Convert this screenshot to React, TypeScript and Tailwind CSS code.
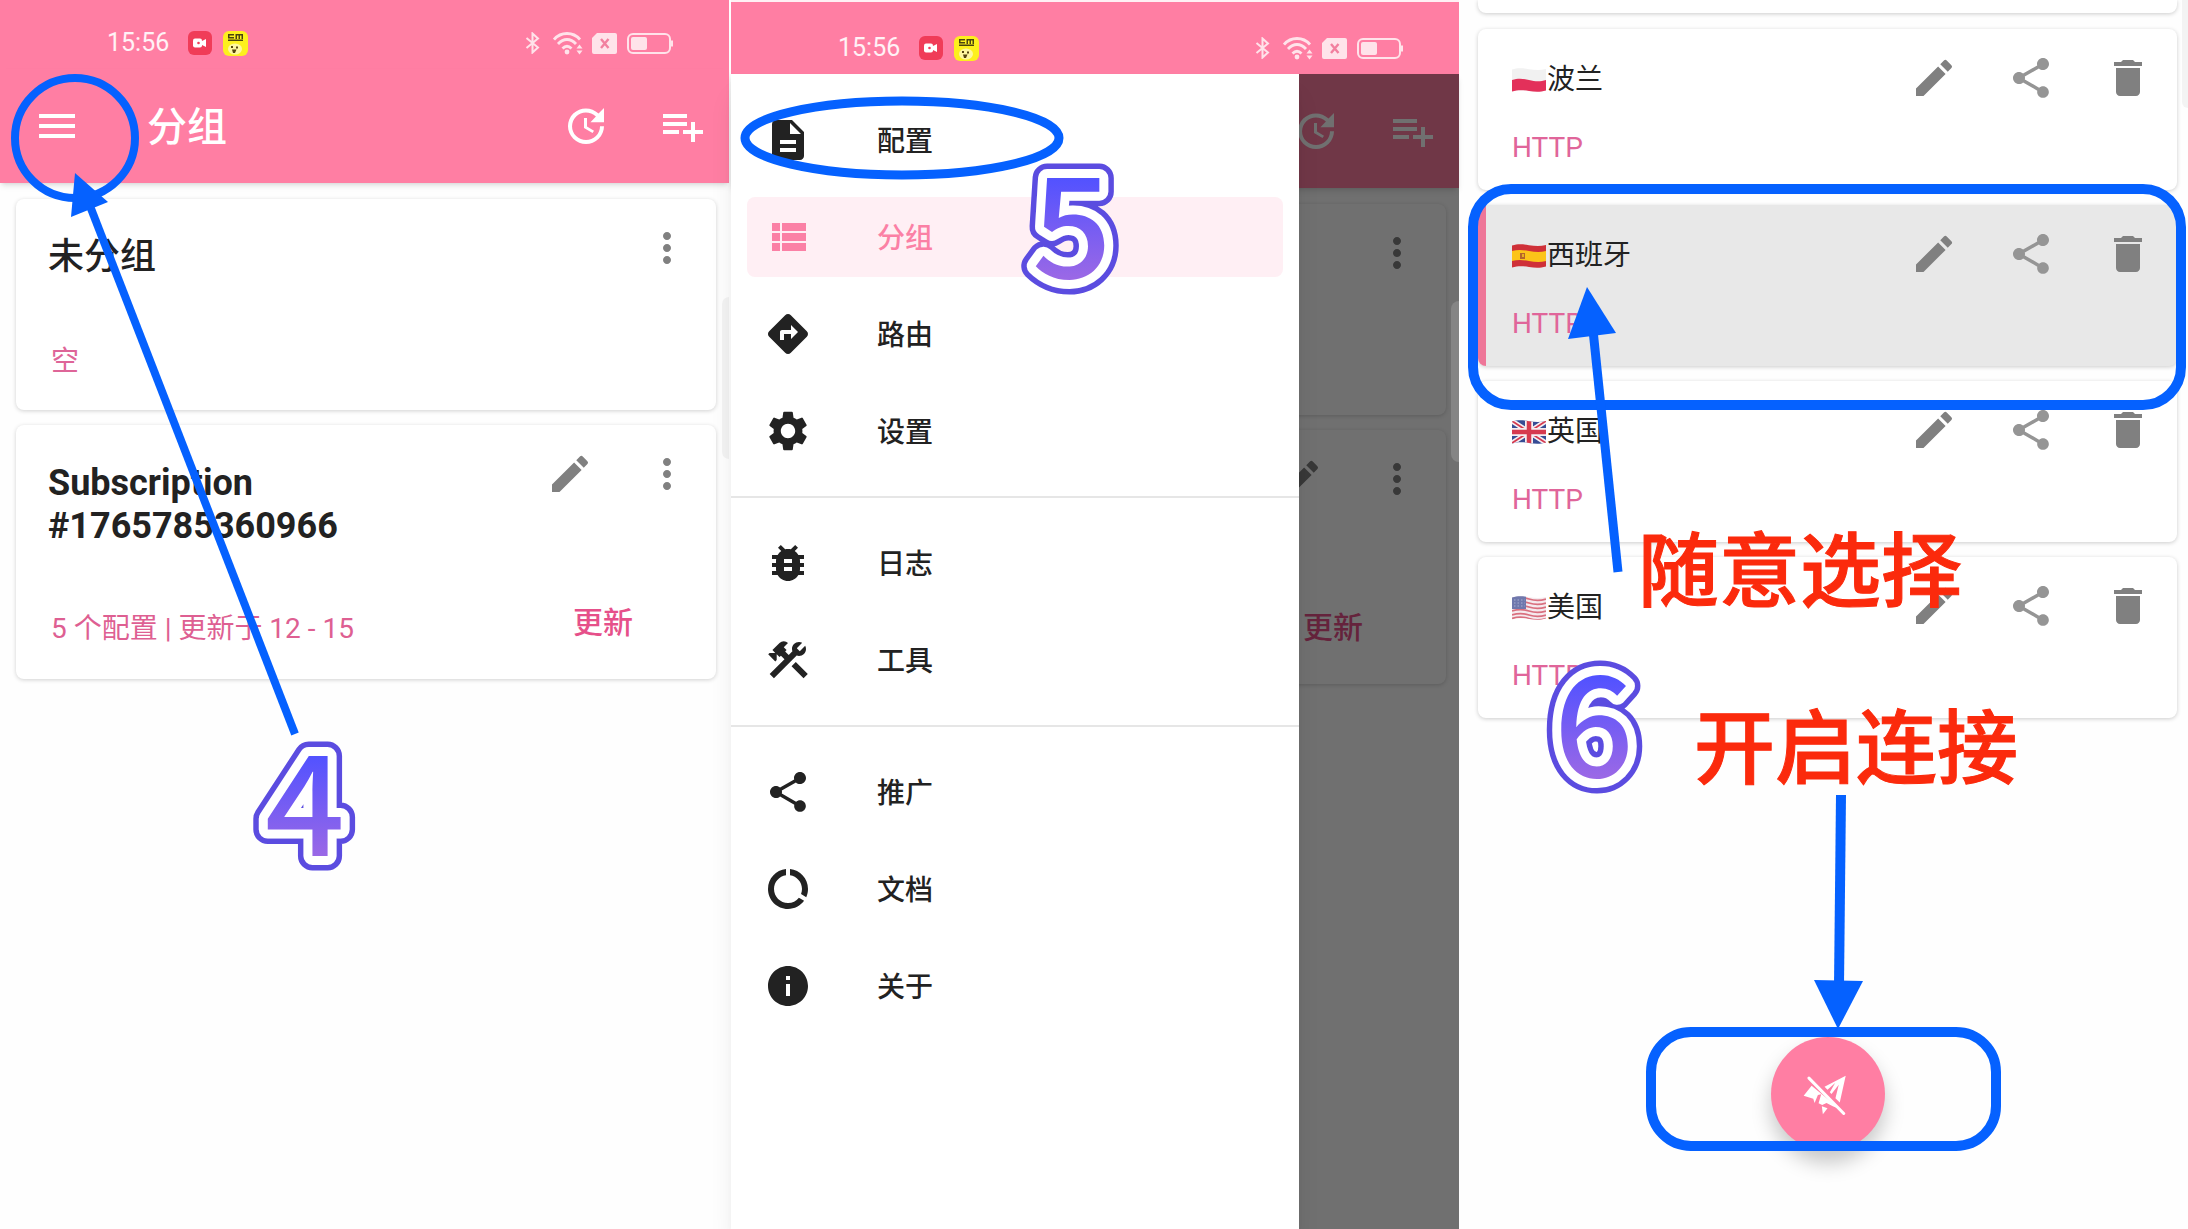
import type { ReactNode } from "react";
import type { IconType } from "react-icons";
import {
  MdBugReport,
  MdConstruction,
  MdDataUsage,
  MdDelete,
  MdDescription,
  MdDirections,
  MdEdit,
  MdInfo,
  MdMenu,
  MdMoreVert,
  MdSettings,
  MdShare,
  MdUpdate,
} from "react-icons/md";

type FlagCode = "pl" | "es" | "gb" | "us";

interface Profile {
  name: string;
  flag: FlagCode;
  selected?: boolean;
}

interface DrawerEntry {
  label: string;
  icon: IconType | typeof ViewListIcon;
  active?: boolean;
}

const PROFILES: Profile[] = [
  { name: "波兰", flag: "pl" },
  { name: "西班牙", flag: "es", selected: true },
  { name: "英国", flag: "gb" },
  { name: "美国", flag: "us" },
];

const DRAWER_SECTIONS: DrawerEntry[][] = [
  [
    { label: "配置", icon: MdDescription },
    { label: "分组", icon: ViewListIcon, active: true },
    { label: "路由", icon: MdDirections },
    { label: "设置", icon: MdSettings },
  ],
  [
    { label: "日志", icon: MdBugReport },
    { label: "工具", icon: MdConstruction },
  ],
  [
    { label: "推广", icon: MdShare },
    { label: "文档", icon: MdDataUsage },
    { label: "关于", icon: MdInfo },
  ],
];

function ViewListIcon({ className }: { className?: string }) {
  return (
    <svg viewBox="0 0 24 24" fill="currentColor" className={className}>
      <path d="M4 14h4v-4H4v4zm0 5h4v-4H4v4zM4 9h4V5H4v4zm5 5h12v-4H9v4zm0 5h12v-4H9v4zM9 5v4h12V5H9z" />
    </svg>
  );
}

function PlaylistAddIcon({ className }: { className?: string }) {
  return (
    <svg viewBox="0 0 24 24" fill="currentColor" className={className}>
      <path d="M14 10H2v2h12v-2zm0-4H2v2h12V6zm4 8v-4h-2v4h-4v2h4v4h2v-4h4v-2h-4zM2 16h8v-2H2v2z" />
    </svg>
  );
}

function PlaneOffIcon() {
  return (
    <svg viewBox="610 338 148 126" className="h-[42px] w-[49px]" fill="#fff">
      <path d="M739 346 721 427 708 414 718 373 696 401 691 396 707 368 684 388 675 379Z" />
      <path d="M636 376 612 406 641 415 645 428 655 404 665 402 657 429 668 434 681 428 700 438 722 447Z" />
      <path d="M667 438 684 444 670 462Z" />
      <path d="M628 353 733 460" stroke="#fff" strokeWidth="9" strokeLinecap="round" />
    </svg>
  );
}

function StatusBar() {
  return (
    <div className="flex h-[69px] items-center justify-between bg-[#ff7ea3] pt-[17px] pr-[56px] pl-[107px]">
      <div className="flex items-center gap-[11px]">
        <span className="mr-2 text-[25px] leading-8 text-white/90">15:56</span>
        <svg viewBox="0 0 24 24" className="size-6">
          <rect width="24" height="24" rx="6" fill="#f03c58" />
          <rect x="5" y="7.5" width="9" height="9" rx="2" fill="#fff" />
          <path d="M13 10.500 18 8v8l-5-2.500Z" fill="#fff" />
          <circle cx="10.500" cy="12" r="1.300" fill="#f03c58" />
        </svg>
        <svg viewBox="0 0 25 25" className="size-[25px]">
          <rect width="25" height="25" rx="6" fill="#fdf01e" />
          <path d="M5 3h6v1.500H6.500V6H11v1.500H5ZM5 8.500h15V10H5ZM12.500 3H20v5h-1.500V4.500H17V8h-1.500V4.500H14V8h-1.500Z" fill="#4a4410" />
          <ellipse cx="12" cy="18" rx="7" ry="5.500" fill="#fff7a0" />
          <path d="M8 15h2v2H8ZM13 15.500h2v2h-2ZM9 18.500h4.500L12 22h-2Z" fill="#55430c" />
        </svg>
      </div>
      <div className="flex items-center text-[#ffe3ea]">
        <svg viewBox="0 0 15 22" className="mr-[13px] h-[22px] w-[15px]" fill="none" stroke="currentColor" strokeWidth="2">
          <path d="M1.500 6 13 15.500 7.500 20.500V1.500L13 6.500 1.500 16" />
        </svg>
        <svg viewBox="0 0 30 24" className="mr-[9px] h-6 w-[30px]" fill="none" stroke="currentColor" strokeWidth="2.800">
          <path d="M1 8.500C8 .5 20 .5 27 8.500M5 13C10.500 7 17.500 7 23 13M9.500 17.500c3-3 6-3 9 0" />
          <circle cx="14" cy="21" r="2.400" fill="currentColor" stroke="none" />
          <path d="m26.500 13.500 3 4h-6ZM26.500 23.500l3-4h-6Z" fill="currentColor" stroke="none" />
        </svg>
        <svg viewBox="0 0 25 21" className="mr-[10px] h-[21px] w-[25px]">
          <path d="M5 0h18a2 2 0 0 1 2 2v17a2 2 0 0 1-2 2H2a2 2 0 0 1-2-2V5Z" fill="currentColor" />
          <path d="m9 6 7.500 9M16.500 6 9 15" stroke="#f2809f" strokeWidth="2.400" />
        </svg>
        <svg viewBox="0 0 46 21" className="h-[21px] w-[46px]">
          <rect x="1" y="1" width="42" height="19" rx="5" fill="none" stroke="currentColor" strokeWidth="2" />
          <rect x="4" y="4" width="16" height="13" rx="2" fill="currentColor" />
          <path d="M45 7.500v6" stroke="currentColor" strokeWidth="2" />
        </svg>
      </div>
    </div>
  );
}

function IconButton({ label, children }: { label: string; children: ReactNode }) {
  return (
    <button type="button" aria-label={label} className="size-12 shrink-0">
      {children}
    </button>
  );
}

// drawerOpen hides the texts that lie under the drawer
function AppBar({ drawerOpen = false }: { drawerOpen?: boolean }) {
  return (
    <header className="flex h-[114px] items-center bg-[#ff7ea3] pr-[22px] pl-[33px] text-white shadow-md">
      <IconButton label="menu">
        <MdMenu className="size-12" />
      </IconButton>
      <h1
        className={`ml-[66px] flex-1 pt-1 text-[40px] leading-[48px] font-medium ${drawerOpen ? "invisible" : ""}`}
      >
        {!drawerOpen && "分组"}
      </h1>
      <IconButton label="update">
        <MdUpdate className="size-12" />
      </IconButton>
      <span className="w-[49px]" />
      <IconButton label="add">
        <PlaylistAddIcon className="size-12" />
      </IconButton>
    </header>
  );
}

function GroupList({ drawerOpen = false }: { drawerOpen?: boolean }) {
  return (
    <main className="flex flex-col gap-[15px] pt-4 pr-[13px] pl-4">
      <section className="flex h-[211px] flex-col rounded-lg bg-white pt-[25px] pr-[25px] pb-[30px] pl-8 shadow-[0_1px_4px_rgba(0,0,0,0.18)]">
        <div className="flex flex-1 items-start justify-between">
          <h2 className="pt-3 text-4xl leading-[43px] font-medium">{!drawerOpen && "未分组"}</h2>
          <IconButton label="more">
            <MdMoreVert className="size-12 text-[#808080]" />
          </IconButton>
        </div>
        <p className="pl-[3px] text-[28px] leading-9 text-[#de6598]">{!drawerOpen && "空"}</p>
      </section>

      <section className="flex h-[254px] flex-col rounded-lg bg-white pt-[25px] pr-[25px] pb-8 pl-8 shadow-[0_1px_4px_rgba(0,0,0,0.18)]">
        <div className="flex flex-1 items-start">
          <h2 className="flex-1 pt-3 text-4xl leading-[43px] font-bold">
            {!drawerOpen && (
              <>
                Subscription
                <br />
                #1765785360966
              </>
            )}
          </h2>
          <div className="flex gap-[49px] text-[#808080]">
            <IconButton label="edit">
              <MdEdit className="size-12" />
            </IconButton>
            <IconButton label="more">
              <MdMoreVert className="size-12" />
            </IconButton>
          </div>
        </div>
        <div className="flex items-end justify-between pr-[58px] pl-[3px] text-[#de5f92]">
          <p className="text-[28px] leading-9">{!drawerOpen && "5 个配置 | 更新于 12 - 15"}</p>
          <button type="button" className="pb-[6px] text-[30px] leading-9 font-medium text-[#e6508a]">
            更新
          </button>
        </div>
      </section>
    </main>
  );
}

function NavDrawer() {
  return (
    <nav className="absolute inset-y-0 left-0 w-[568px] bg-white pt-[26px] shadow-xl">
      {DRAWER_SECTIONS.map((section, i) => (
        <ul
          key={section[0].label}
          className={`flex flex-col gap-[17px] px-4 pb-[25px] ${i > 0 ? "border-t-2 border-[#e6e6e6] pt-[25px]" : ""}`}
        >
          {section.map(({ label, icon: Icon, active }) => (
            <li key={label}>
              <a
                href="#"
                className={`flex h-20 items-center gap-[65px] rounded-lg pl-[17px] text-[28px] leading-9 font-medium ${
                  active ? "bg-[#ffeff4] text-[#fb80a5]" : "text-[#222]"
                }`}
              >
                <Icon className="size-12" />
                <span className="pt-1">{label}</span>
              </a>
            </li>
          ))}
        </ul>
      ))}
    </nav>
  );
}

function Flag({ code }: { code: FlagCode }) {
  const clip = `flag-${code}`;
  return (
    <svg viewBox="0 0 34 24" className="h-6 w-[34px] shrink-0">
      <clipPath id={clip}>
        <path d="M0 1.500C6-.3 11 .3 17 1.200s11 1.300 17-.2v21.500c-6 1.800-11 1.500-17 .5s-11-1.300-17 .5Z" />
      </clipPath>
      <g clipPath={`url(#${clip})`}>
        {code === "pl" && (
          <>
            <rect width="34" height="24" fill="#f1f1f1" />
            <path d="M0 12c6-2 11-1.500 17 0s11 2 17 0v12H0Z" fill="#e3305a" />
          </>
        )}
        {code === "es" && (
          <>
            <rect width="34" height="24" fill="#cf3038" />
            <path d="M0 7c6-1.500 11-1 17 0s11 1.500 17 0v10c-6 1.500-11 1-17 0s-11-1.500-17 0Z" fill="#fcc419" />
            <path d="M8 9h5v6H8Z" fill="#b5652b" />
            <path d="M10 10h2v3h-2Z" fill="#e8b020" />
          </>
        )}
        {code === "gb" && (
          <>
            <rect width="34" height="24" fill="#364c94" />
            <path d="M0 1 34 23M34 1 0 23" stroke="#f4eef2" strokeWidth="5" />
            <path d="M0 1 34 23M34 1 0 23" stroke="#d63a4f" strokeWidth="1.800" />
            <path d="M17 0v24M0 12h34" stroke="#f4eef2" strokeWidth="8" />
            <path d="M17 0v24M0 12h34" stroke="#d63a4f" strokeWidth="4.500" />
          </>
        )}
        {code === "us" && (
          <>
            <rect width="34" height="24" fill="#f5eaee" />
            <path
              d="M0 3c6-2 11-2 17 0s11 2 17 0M0 7c6-2 11-2 17 0s11 2 17 0M0 11c6-2 11-2 17 0s11 2 17 0M0 15c6-2 11-2 17 0s11 2 17 0M0 19c6-2 11-2 17 0s11 2 17 0M0 22.500c6-2 11-2 17 0s11 2 17 0"
              fill="none"
              stroke="#d9707f"
              strokeWidth="1.800"
            />
            <rect width="14" height="13" fill="#6f78ad" />
            <path d="M2 4h11M2 7h11M2 10h11" stroke="#a9aed0" strokeDasharray="1.500 2" />
          </>
        )}
      </g>
    </svg>
  );
}

function ProfileCard({ profile }: { profile: Profile }) {
  return (
    <li
      className={`relative flex h-[161px] items-start justify-between overflow-hidden rounded-lg pt-[25px] pr-[25px] pl-[34px] shadow-[0_1px_4px_rgba(0,0,0,0.2)] ${
        profile.selected ? "bg-[#e8e8e8]" : "bg-white"
      }`}
    >
      {profile.selected && <span className="absolute inset-y-0 left-0 w-2 bg-[#ee7698]" />}
      <div className="flex flex-col gap-8 pt-2 text-[28px] leading-9">
        <p className="flex items-center gap-px">
          <Flag code={profile.flag} />
          {profile.name}
        </p>
        <p className="text-[#e0659a]">HTTP</p>
      </div>
      <div className="flex gap-[49px] text-[#808080]">
        <IconButton label="edit">
          <MdEdit className="size-12" />
        </IconButton>
        <IconButton label="share">
          <MdShare className="size-12 text-[#959595]" />
        </IconButton>
        <IconButton label="delete">
          <MdDelete className="size-12" />
        </IconButton>
      </div>
    </li>
  );
}

// Step number with a white inner and a purple outer outline
function StepNumber({ value, x, y }: { value: string; x: number; y: number }) {
  const id = `step-${value}`;
  return (
    <g strokeLinejoin="round" textAnchor="middle">
      <defs>
        <linearGradient id={`${id}-fill`} gradientUnits="userSpaceOnUse" x1="0" x2="0" y1={y - 100} y2={y}>
          <stop offset="0" stopColor="#5252ff" />
          <stop offset="1" stopColor="#9a68e6" />
        </linearGradient>
        <text id={id} x={x} y={y} className="font-['Noto_Sans_CJK_SC',sans-serif] text-[140px] font-medium">
          {value}
        </text>
      </defs>
      <use href={`#${id}`} fill="#5b4ce0" stroke="#5b4ce0" strokeWidth="29" />
      <use href={`#${id}`} fill="#fff" stroke="#fff" strokeWidth="18" />
      <use href={`#${id}`} fill={`url(#${id}-fill)`} />
    </g>
  );
}

function Overlay({ children }: { children: ReactNode }) {
  return (
    <svg className="pointer-events-none absolute top-0 left-0 h-full w-full overflow-visible" fill="none">
      {children}
    </svg>
  );
}

export default function App() {
  return (
    <div className="grid min-h-screen grid-cols-[731fr_728fr_729fr] overflow-hidden bg-[#fefefe] font-[Roboto,'Noto_Sans_CJK_SC',sans-serif] text-[#222]">
      <div className="relative pr-[2px]">
        <StatusBar />
        <AppBar />
        <GroupList />
        <span className="absolute top-[297px] right-[2px] h-[162px] w-[7px] rounded-l-lg bg-[#f3f3f3]" />
        <Overlay>
          <ellipse cx="75" cy="138" rx="60" ry="60" stroke="#0561ff" strokeWidth="8" />
          <path d="M90 206 295 734" stroke="#0561ff" strokeWidth="8" />
          <path d="M75 173 71 217 108 202Z" fill="#0561ff" />
          <StepNumber value="4" x={305} y={856} />
        </Overlay>
      </div>

      <div className="relative flex flex-col">
        <div className="border-t-2 border-[#fff0f4] bg-[#ff7ea3] pt-[3px]">
          <StatusBar />
        </div>
        <div className="relative flex-1">
          <AppBar drawerOpen />
          <GroupList drawerOpen />
          <div className="absolute inset-0 bg-black/56" />
          <span className="absolute top-[227px] right-0 h-[161px] w-2 rounded-l-lg bg-[#858585]" />
          <NavDrawer />
        </div>
        <Overlay>
          <ellipse cx="171" cy="138" rx="157" ry="37" stroke="#0561ff" strokeWidth="9" />
          <StepNumber value="5" x={341} y={278} />
        </Overlay>
      </div>

      <div className="relative flex flex-col pr-[11px] pl-[19px]">
        <div className="h-[13px] rounded-b-lg bg-white shadow-[0_1px_4px_rgba(0,0,0,0.2)]" />
        <ul className="flex flex-col gap-[15px] pt-4">
          {PROFILES.map((profile) => (
            <ProfileCard key={profile.name} profile={profile} />
          ))}
        </ul>
        <button
          type="button"
          aria-label="connect"
          className="mx-auto mt-auto mb-[78px] flex size-[114px] items-center justify-center rounded-full bg-[#ff7ea3] shadow-[0_12px_20px_rgba(0,0,0,0.22)]"
        >
          <PlaneOffIcon />
        </button>
        <span className="absolute top-0 right-0 h-[108px] w-[6px] rounded-bl-lg bg-[#f3f3f3]" />
        <Overlay>
          <rect x="14" y="189" width="708" height="216" rx="38" stroke="#0561ff" strokeWidth="10" />
          <path d="M134 330 159 572" stroke="#0561ff" strokeWidth="9" />
          <path d="M128 287 109 339 157 333Z" fill="#0561ff" />
          <rect x="192" y="1032" width="345" height="114" rx="40" stroke="#0561ff" strokeWidth="10" />
          <path d="M382 795 380 985" stroke="#0561ff" strokeWidth="10" />
          <path d="M379 1029 355 980 404 981Z" fill="#0561ff" />
          <g
            fill="#fb2a0c"
            stroke="#fb2a0c"
            strokeWidth="1"
            className="font-['Noto_Sans_CJK_SC',sans-serif] text-[81px] font-medium"
          >
            <text x="179" y="600">随意选择</text>
            <text x="235" y="777">开启连接</text>
          </g>
          <StepNumber value="6" x={135} y={777} />
        </Overlay>
      </div>
    </div>
  );
}
